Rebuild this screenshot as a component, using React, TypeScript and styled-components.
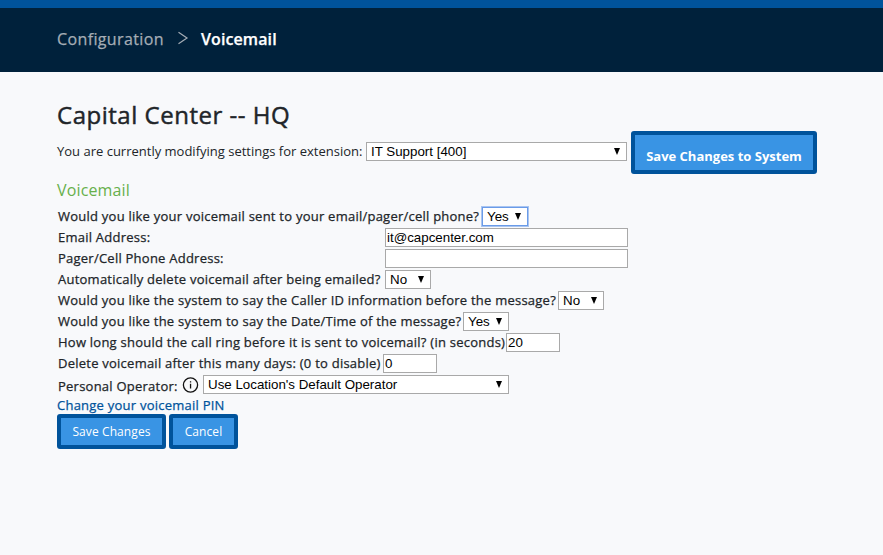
import { ReactNode } from "react";
import styled, { createGlobalStyle, css } from "styled-components";

const GlobalStyle = createGlobalStyle`
  * {
    box-sizing: border-box;
  }
  body {
    margin: 0;
    background: #f8f9fb;
    color: #212529;
    font: 400 13px/21px "Open Sans", sans-serif;
  }
`;

// Between regular and semibold
const mediumText = css`
  letter-spacing: 0.24px;
  -webkit-text-stroke: 0.25px currentColor;
`;

const Header = styled.header`
  height: 72px;
  border-top: 8px solid #00539b;
  background: #00213b;
  padding: 0 0 2px 57px;
  display: flex;
  align-items: center;
  font-size: 16px;
  line-height: 24px;
`;

const Crumb = styled.span<{ $current?: boolean }>`
  ${mediumText}
  color: ${(p) => (p.$current ? "#fff" : "#a5adb5")};
  font-weight: ${(p) => (p.$current ? 600 : 400)};
  letter-spacing: ${(p) => (p.$current ? 0.1 : 0.37)}px;
  width: ${(p) => (p.$current ? "auto" : "107px")};
  white-space: nowrap;
`;

const Chevron = styled.svg`
  display: block;
  margin: 0 12px 2px 13px;
`;

const Main = styled.main`
  padding: 27px 57px 0;
`;

const Title = styled.h1`
  margin: 0;
  font-size: 24px;
  font-weight: 400;
  line-height: 32px;
  letter-spacing: 0.52px;
  -webkit-text-stroke: 0.45px currentColor;
`;

const ExtensionRow = styled.div`
  display: flex;
  height: 43px;
`;

const ExtensionLabel = styled.label`
  width: 309px;
  padding-top: 10px;
  white-space: nowrap;
`;

const Button = styled.button<{ $width: number; $large?: boolean }>`
  width: ${(p) => p.$width}px;
  height: ${(p) => (p.$large ? 43 : 35)}px;
  padding: ${(p) => (p.$large ? "7px 0 0" : "0")};
  border: 4px solid #00539b;
  border-radius: 3px;
  background: #3994e4;
  color: #fff;
  font: ${(p) => (p.$large ? 700 : 400)} ${(p) => (p.$large ? 13 : 12)}px/18px
    "Open Sans", sans-serif;
  letter-spacing: ${(p) => (p.$large ? 0 : 0.1)}px;
  white-space: nowrap;
`;

const SectionTitle = styled.h2`
  margin: 5px 0;
  color: #67b04b;
  font-size: 16px;
  font-weight: 400;
  line-height: 22px;
  letter-spacing: 0.15px;
`;

const Row = styled.div`
  display: flex;
  align-items: center;
  height: 21px;
  padding-left: 1px;
`;

const Label = styled.label<{ $width: number }>`
  ${mediumText}
  width: ${(p) => p.$width}px;
  flex: none;
  white-space: nowrap;
`;

const SelectBox = styled.span<{ $width: number }>`
  position: relative;
  width: ${(p) => p.$width}px;
  height: 19px;
  flex: none;
`;

const ExtensionSelect = styled.div`
  display: flex;
  padding-top: 11px;
  margin-right: 4px;
`;

const NativeSelect = styled.select<{ $active?: boolean }>`
  display: block;
  appearance: none;
  width: 100%;
  height: 100%;
  padding: 0 4px;
  border: 1px solid ${(p) => (p.$active ? "#6a9be8" : "#a9a9a9")};
  border-radius: 0;
  box-shadow: ${(p) => (p.$active ? "0 0 0 1px #a9c5f1" : "none")};
  outline: none;
  background: #fff;
  color: #000;
  font: 13.333px/17px "Liberation Sans", Arial, sans-serif;
`;

const Arrow = styled.svg`
  position: absolute;
  right: 7px;
  top: 6px;
  pointer-events: none;
`;

const Input = styled.input<{ $width: number }>`
  width: ${(p) => p.$width}px;
  height: 19px;
  padding: 0 1px;
  border: 1px solid #a9a9a9;
  border-radius: 0;
  background: #fff;
  color: #000;
  font: 13.333px/17px "Liberation Sans", Arial, sans-serif;
`;

const OperatorLabel = styled(Label)`
  padding-top: 3px;
`;

const InfoIcon = styled.svg`
  flex: none;
  margin-right: 4px;
`;

const PinLink = styled.a`
  ${mediumText}
  display: block;
  width: max-content;
  height: 19px;
  line-height: 20px;
  color: #00539b;
  text-decoration: none;
`;

const Actions = styled.div`
  display: flex;
  gap: 3px;
`;

type SelectProps = {
  width: number;
  active?: boolean;
  children: ReactNode;
};

function Select({ width, active, children }: SelectProps) {
  return (
    <SelectBox $width={width}>
      <NativeSelect $active={active}>{children}</NativeSelect>
      <Arrow width="6" height="7" viewBox="0 0 6 7">
        <path d="M0 0h6L3 7z" fill="#000" />
      </Arrow>
    </SelectBox>
  );
}

export default function App() {
  return (
    <>
      <GlobalStyle />
      <Header>
        <Crumb>Configuration</Crumb>
        <Chevron width="12" height="14" viewBox="0 0 12 14">
          <path d="M1.5 1.2 10 7 1.5 12.8" fill="none" stroke="#a5adb5" strokeWidth="1.2" />
        </Chevron>
        <Crumb $current>Voicemail</Crumb>
      </Header>
      <Main>
        <Title>Capital Center -- HQ</Title>
        <ExtensionRow>
          <ExtensionLabel>You are currently modifying settings for extension:</ExtensionLabel>
          <ExtensionSelect>
            <Select width={261}>
              <option>IT Support [400]</option>
            </Select>
          </ExtensionSelect>
          <Button $width={186} $large>
            Save Changes to System
          </Button>
        </ExtensionRow>
        <SectionTitle>Voicemail</SectionTitle>
        <Row>
          <Label $width={424}>Would you like your voicemail sent to your email/pager/cell phone?</Label>
          <Select width={46} active>
            <option>Yes</option>
            <option>No</option>
          </Select>
        </Row>
        <Row>
          <Label $width={327}>Email Address:</Label>
          <Input $width={243} defaultValue="it@capcenter.com" />
        </Row>
        <Row>
          <Label $width={327}>Pager/Cell Phone Address:</Label>
          <Input $width={243} />
        </Row>
        <Row>
          <Label $width={327}>Automatically delete voicemail after being emailed?</Label>
          <Select width={46}>
            <option>No</option>
            <option>Yes</option>
          </Select>
        </Row>
        <Row>
          <Label $width={500}>
            Would you like the system to say the Caller ID information before the message?
          </Label>
          <Select width={46}>
            <option>No</option>
            <option>Yes</option>
          </Select>
        </Row>
        <Row>
          <Label $width={405}>Would you like the system to say the Date/Time of the message?</Label>
          <Select width={46}>
            <option>Yes</option>
            <option>No</option>
          </Select>
        </Row>
        <Row>
          <Label $width={448}>
            How long should the call ring before it is sent to voicemail? (in seconds)
          </Label>
          <Input $width={54} defaultValue="20" />
        </Row>
        <Row>
          <Label $width={325}>Delete voicemail after this many days: (0 to disable)</Label>
          <Input $width={54} defaultValue="0" />
        </Row>
        <Row>
          <OperatorLabel $width={124}>Personal Operator:</OperatorLabel>
          <InfoIcon width="17" height="16" viewBox="0 0 17 16">
            <circle cx="8.5" cy="8" r="7.1" fill="none" stroke="#111" strokeWidth="1.3" />
            <path d="M7.9 4.3h1.3v1.3H7.9zM7.9 6.7h1.3V11.5H7.9z" fill="#111" />
          </InfoIcon>
          <Select width={306}>
            <option>Use Location's Default Operator</option>
          </Select>
        </Row>
        <PinLink href="#">Change your voicemail PIN</PinLink>
        <Actions>
          <Button $width={109}>Save Changes</Button>
          <Button $width={69}>Cancel</Button>
        </Actions>
      </Main>
    </>
  );
}
